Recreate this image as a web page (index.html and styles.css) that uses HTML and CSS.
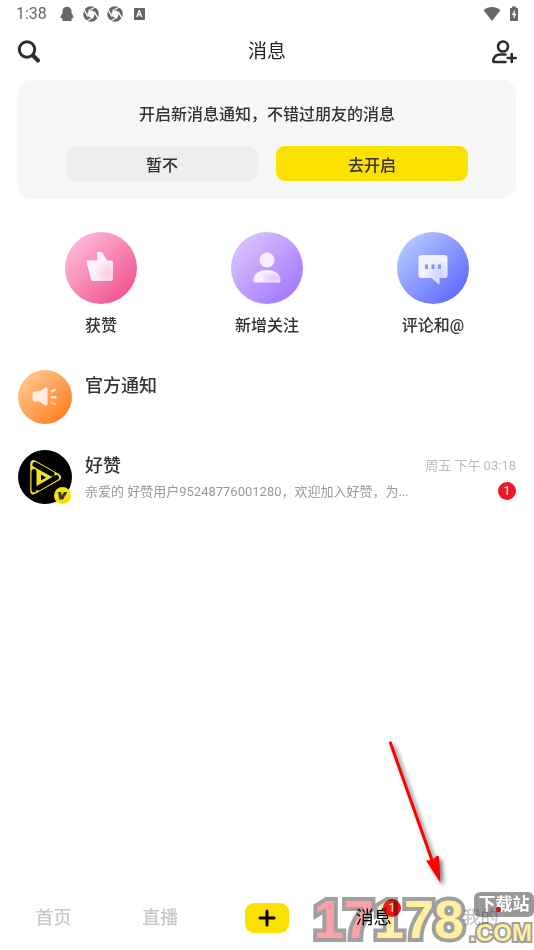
FILE: index.html
```html
<!DOCTYPE html>
<html lang="zh-CN">
<head>
<meta charset="utf-8">
<meta name="viewport" content="width=device-width, initial-scale=1">
<title>消息</title>
<link rel="stylesheet" href="styles.css">
</head>
<body>
<div class="status">
  <span class="clock">1:38</span>
  <svg class="s-icon" width="16" height="16" viewBox="0 0 16 16"><path d="M8 .7C5.300.7 3.500 2.600 3.500 5v2.200C2 9 1.300 11 1.600 12.200c.3.900 1-.1 1.300-.5l.9 1.500c-.8.500-1 1.800.2 1.800h8c1.200 0 1-1.300.2-1.800l.9-1.500c.3.400 1 1.400 1.300.5.300-1.200-.4-3.200-1.900-5V5C12.500 2.600 10.700.7 8 .7z"/></svg>
  <svg class="s-icon" width="16" height="16" viewBox="0 0 16 16"><use href="#aperture"/></svg>
  <svg class="s-icon" width="16" height="16" viewBox="0 0 16 16"><g id="aperture"><circle cx="8" cy="8" r="5.700" fill="none" stroke="#666" stroke-width="4.200"/><path d="M5.500 4.800L12.500 1M11.200 5.500L15 12.500M10.500 11.200L3.500 15M4.800 10.500L1 3.500" stroke="#fff" stroke-width="1.300"/></g></svg>
  <span class="keyboard">A</span>
  <svg class="s-icon wifi" width="18" height="16" viewBox="0 0 18 16"><path d="M9 15L.6 4.200C5-.2 13-.2 17.400 4.200z"/></svg>
  <svg class="s-icon" width="10" height="16" viewBox="0 0 10 16"><path d="M3 .5h4V2h1.200q.8 0 .8.800v11.400q0 .8-.8.800H1.800Q1 15 1 14.200V2.800Q1 2 1.800 2H3z"/><path fill="#fff" d="M6 3.500L2.700 9h2v4L7.600 7.800H5.700z"/></svg>
</div>

<header class="header">
  <button class="icon-button" aria-label="搜索"><svg width="26" height="26" viewBox="0 0 26 26" fill="none" stroke="#2d2d2d" stroke-width="3"><circle cx="11" cy="10.500" r="7.700"/><path d="M17 16.500l5 5" stroke-width="4" stroke-linecap="round"/></svg></button>
  <h1>消息</h1>
  <button class="icon-button" aria-label="添加好友"><svg width="26" height="26" viewBox="0 0 26 26" fill="none" stroke="#2d2d2d" stroke-width="2.600" stroke-linecap="round"><circle cx="11" cy="7.500" r="5"/><path d="M13.500 23H2.300Q.8 23 1.300 21C2.300 17.300 5 15.500 8 15.500h5.500M19.700 15v8M15.700 19h8"/></svg></button>
</header>

<main>
  <section class="notice">
    <p>开启新消息通知，不错过朋友的消息</p>
    <div class="notice-actions">
      <button class="later">暂不</button>
      <button class="enable">去开启</button>
    </div>
  </section>

  <nav class="shortcuts" aria-label="消息分类">
    <a href="#likes"><span class="disc pink"><svg width="72" height="72" viewBox="0 0 72 72"><defs><radialGradient id="g1" cx=".8" cy=".75" r=".5"><stop stop-color="#fcc8df"/><stop offset="1" stop-color="#fff3f9"/></radialGradient></defs><path fill="url(#g1)" d="M33 20h3q1.200 0 1.800 1.200L42 28.500h4.500q1.500 0 1.500 1.500V47q0 2-2 2H28q-1.500 0-2-1.500L21.500 30q-.4-1.500 1.200-1.500H32.500L32 21q0-1 1-1z"/></svg></span>获赞</a>
    <a href="#followers"><span class="disc purple"><svg width="72" height="72" viewBox="0 0 72 72"><defs><radialGradient id="g2" cx=".75" cy=".65" r=".5"><stop stop-color="#d9c3ff"/><stop offset="1" stop-color="#f6efff"/></radialGradient></defs><circle cx="36" cy="28" r="7.500" fill="#f6edff"/><path fill="url(#g2)" d="M22.500 49C22 43 27 38 36 38s14 5 13.500 11q-.1 1.500-1.500 1.500H24q-1.400 0-1.500-1.500z"/></svg></span>新增关注</a>
    <a href="#comments"><span class="disc blue"><svg width="72" height="72" viewBox="0 0 72 72"><defs><radialGradient id="g3" cx=".7" cy=".65" r=".5"><stop stop-color="#cfd2ff"/><stop offset="1" stop-color="#f0f2ff"/></radialGradient></defs><path fill="url(#g3)" d="M24.500 23h23q3 0 3 3v17q0 3-3 3h-5v5.500q0 1-1 .4L34.500 46h-10q-3 0-3-3V26q0-3 3-3z"/><path stroke="#8a93f6" stroke-width="3" d="M29.500 32.500v4.500M36 32.500v4.500M42.500 32.500v4.500"/></svg></span>评论和@</a>
  </nav>

  <ul class="threads">
    <li><a class="thread" href="#official">
      <span class="avatar orange"><svg width="54" height="54" viewBox="0 0 54 54"><path fill="#ffeedd" d="M16.500 21.500h4.500l6-3.700q2.500-1.200 2.500 1.200v15q0 2.400-2.500 1.200l-6-3.700h-4.500q-2 0-2-2v-6q0-2 2-2z"/><g fill="none" stroke="#ffe3cc" stroke-width="2.600"><path d="M33 21.500l5-2M33 27.300h5.500" /><path d="M33 32.500l5 2" opacity=".6"/></g></svg></span>
      <span class="body"><strong>官方通知</strong></span>
    </a></li>
    <li><a class="thread" href="#haozan">
      <span class="avatar black"><svg width="54" height="54" viewBox="0 0 54 54" fill="none" stroke-linejoin="round" stroke-linecap="round"><path d="M16.500 11q-3.500-1-3.500 3V41q0 4 4 2L41 29.500q3-2.200 0-4.500z" fill="#ece32b" stroke="#ece32b" stroke-width="1.500"/><path d="M17 14.500L34 24M16 21.500v18.500M20.500 38L38.500 27.500" stroke="#000" stroke-width="5"/><path d="M23 24.500v6l5-3z" fill="#000"/></svg>
        <svg class="verified" width="17" height="17" viewBox="0 0 17 17"><circle cx="8.500" cy="8.500" r="8.500" fill="#fbe100"/><path d="M4 5h3.200l.5 4L10 5h3.400L9 12.500H5.300z" fill="#333"/></svg></span>
      <span class="body"><strong>好赞</strong><span class="preview">亲爱的 好赞用户95248776001280，欢迎加入好赞，为...</span></span>
      <span class="meta"><time>周五 下午 03:18</time><span class="count">1</span></span>
    </a></li>
  </ul>
</main>

<nav class="tabs" aria-label="主导航">
  <a href="#home">首页</a>
  <a href="#live">直播</a>
  <button class="create" aria-label="发布"><svg width="18" height="18" viewBox="0 0 18 18" stroke="#000" stroke-width="3" stroke-linecap="round"><path d="M9 2v14M2 9h14"/></svg></button>
  <a class="current" href="#messages"><span class="tab-label">消息<span class="count">1</span></span></a>
  <a href="#me"><span class="tab-label">我的<span class="dot"></span></span></a>
</nav>

<svg class="arrow" width="70" height="156" viewBox="0 0 70 156"><path d="M10.500 13L53 133" stroke="#f00" stroke-width="3" stroke-linecap="round"/><path d="M60.500 153L46 130.500l6.500-.5 4.500-4.500 2 1z" fill="#f00"/></svg>
<div class="watermark"><span class="wm-number"><span>17</span>178</span><span class="wm-side"><span class="wm-tag">下载站</span><span class="wm-com">.COM</span></span></div>
</body>
</html>
```
FILE: styles.css
```css
* { box-sizing: border-box; }
body {
  margin: 0;
  min-height: 100vh;
  position: relative;
  display: flex;
  flex-direction: column;
  overflow-x: hidden;
  background: #fff;
  color: #333;
  font-family: Roboto, "Noto Sans CJK SC", sans-serif;
  font-size: 16px;
}
button { border: 0; padding: 0; background: none; font: inherit; color: inherit; }
a { color: inherit; text-decoration: none; }
svg { display: block; flex: none; }

.status { display: flex; align-items: center; gap: 8px; height: 27px; padding: 0 15px 0 16px; }
.clock { margin-right: 4px; color: #666; font-size: 16px; }
.s-icon { fill: #666; }
.keyboard {
  width: 11px; height: 12px; margin-left: 3px;
  border-radius: 1px; background: #666; color: #fff;
  font-size: 9px; font-weight: 700; line-height: 12px; text-align: center;
}
.wifi { margin-left: auto; }

.header { display: flex; align-items: center; justify-content: space-between; height: 49px; padding: 0 16px; }
.header h1 { margin: 0; color: #222; font-size: 19px; font-weight: 400; line-height: 26px; }
.icon-button { width: 26px; height: 26px; }

main { flex: 1; padding: 4px 18px 0; }
.notice { padding: 23px 48px 18px; border-radius: 14px; background: #f7f7f7; font-weight: 500; text-align: center; }
.notice p { margin: 0 0 19px; line-height: 24px; white-space: nowrap; }
.notice-actions { display: grid; grid-template-columns: 1fr 1fr; gap: 18px; }
.notice-actions button { height: 35px; border-radius: 9px; }
.later { background: #eee; }
.enable { background: #fbe100; }

.shortcuts { display: grid; grid-template-columns: repeat(3, 1fr); margin-top: 33px; font-weight: 500; line-height: 24px; }
.shortcuts a { display: flex; flex-direction: column; align-items: center; gap: 10px; }
.disc, .avatar { border-radius: 50%; }
.pink { background: linear-gradient(135deg, #fdbcdc 10%, #f2518d 90%); }
.purple { background: linear-gradient(135deg, #dcc3fd 10%, #a077ff 90%); }
.blue { background: linear-gradient(135deg, #b5c9ff 10%, #5f68ff 90%); }
.orange { background: linear-gradient(135deg, #ffc990 10%, #ff7d1f 90%); }
.black { background: #000; }

.threads { display: grid; gap: 26px; margin: 32px 0 0; padding: 0; list-style: none; }
.thread { display: flex; gap: 13px; }
.avatar { position: relative; flex: none; }
.verified { position: absolute; right: 1px; bottom: 0; }
.body { flex: 1; min-width: 0; display: flex; flex-direction: column; padding-top: 2px; }
.body strong { font-size: 18px; font-weight: 500; line-height: 28px; }
.preview { overflow: hidden; color: #999; font-size: 13px; line-height: 24px; white-space: nowrap; }
.meta { display: flex; flex-direction: column; align-items: flex-end; gap: 5px; margin-left: -60px; padding-top: 5px; color: #bbb; font-size: 13px; line-height: 22px; white-space: nowrap; }
.count { width: 18px; height: 18px; border-radius: 50%; background: #f01820; color: #fff; font-size: 13px; line-height: 18px; text-align: center; }

.tabs { display: grid; grid-template-columns: repeat(5, 1fr); place-items: center; height: 64px; color: #c8c8c8; font-size: 18px; font-weight: 500; line-height: 28px; }
.create { display: grid; place-items: center; width: 44px; height: 30px; border-radius: 9px; background: #fbe100; }
.current { color: #000; font-weight: 400; }
.tab-label { position: relative; }
.tab-label .count { position: absolute; top: -8px; right: -9px; font-weight: 400; }
.dot { position: absolute; top: 0; right: -2px; width: 5px; height: 5px; border-radius: 50%; background: #f01820; }

.arrow { position: absolute; right: 84px; bottom: 64px; filter: drop-shadow(3px 3px 2px #777); }
.watermark { position: absolute; right: 0; bottom: 0; display: flex; gap: 2px; height: 60px; mix-blend-mode: multiply; pointer-events: none; }
.wm-number, .wm-com {
  color: #ffef9f;
  font-family: "Liberation Sans", sans-serif;
  font-weight: 700;
  -webkit-text-stroke: 8px #a0a0a0;
  paint-order: stroke fill;
}
.wm-number { font-size: 54px; line-height: 58px; }
.wm-number span { color: #ff9fa7; }
.wm-side { display: flex; flex-direction: column; align-items: flex-end; width: 68px; }
.wm-tag { width: 60px; height: 25px; margin-top: 2px; border-radius: 6px; background: #999; color: #fff; font-size: 17px; font-weight: 700; line-height: 24px; text-align: center; }
.wm-com { padding-right: 2px; font-size: 24px; line-height: 32px; -webkit-text-stroke-width: 4px; }
```
